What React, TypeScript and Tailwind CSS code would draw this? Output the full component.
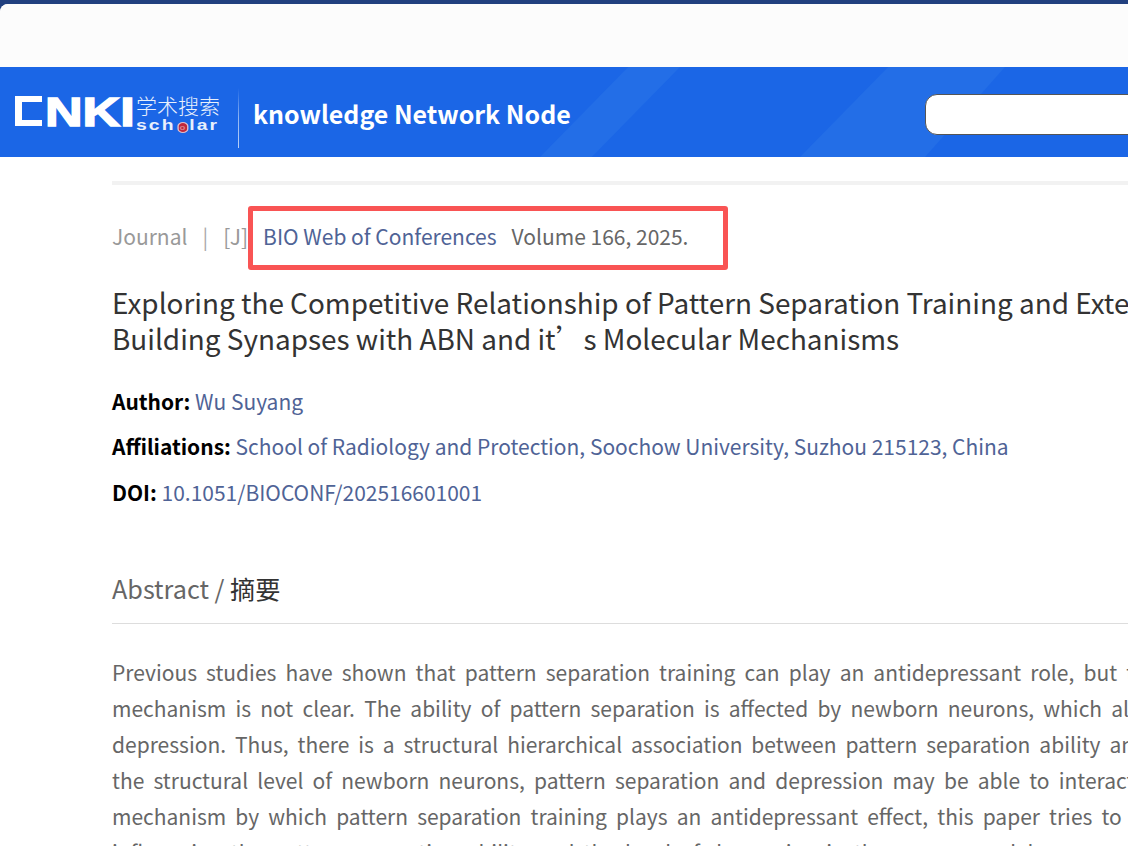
const FONT = "font-['Noto_Sans_CJK_SC','Noto_Sans',sans-serif]";

const lines: [string, string][] = [
  ["Previous studies have shown that pattern separation training can play an antidepressant role, but the", "[word-spacing:4.4px]"],
  ["mechanism is not clear. The ability of pattern separation is affected by newborn neurons, which also", "[word-spacing:4.5px]"],
  ["depression. Thus, there is a structural hierarchical association between pattern separation ability and", "[word-spacing:4.2px]"],
  ["the structural level of newborn neurons, pattern separation and depression may be able to interact", "[word-spacing:4.45px]"],
  ["mechanism by which pattern separation training plays an antidepressant effect, this paper tries to", "[word-spacing:4.4px]"],
  ["influencing the pattern separation ability and the level of depression in the mouse model", "[word-spacing:4.4px]"],
];

function Logo() {
  return (
    <div className="flex items-start h-[34px] text-white">
      <div className="w-[27px] h-[30px] mt-[1px] border-l-[7px] border-y-[6px] border-white" />
      <div className="w-[88px] h-[30px] ml-[3px] mt-[2px] overflow-visible">
        <span className="block origin-top-left scale-x-[1.27] font-['Liberation_Sans',sans-serif] font-bold text-[41px] leading-[30px] [-webkit-text-stroke:1.5px_white] whitespace-nowrap">NKI</span>
      </div>
      <div className="flex flex-col ml-[3px] opacity-90">
        <span className={`${FONT} text-[21px] leading-[20px] font-light whitespace-nowrap`}>学术搜索</span>
        <span className="block origin-top-left scale-x-[1.38] mt-[4px] font-['Liberation_Sans',sans-serif] text-[14px] leading-[12px] font-bold tracking-[1.5px] whitespace-nowrap">
          sch<span className="inline-block w-[8px] h-[11px] rounded-full bg-[#d4212a] border border-[#f3c9cc] text-[#e88] leading-[9px] text-[7px] text-center tracking-normal mx-[1px]">o</span>lar
        </span>
      </div>
    </div>
  );
}

export default function App() {
  return (
    <div className={`w-[1128px] h-[846px] overflow-hidden bg-[#21407f] pt-[4px] ${FONT}`}>
      <div className="h-[842px] bg-white rounded-tl-[8px] overflow-hidden">
        <div className="h-[63px] bg-[#fcfcfc]" />
        <header className="relative h-[90px] bg-[#1b66e6] flex items-center overflow-hidden">
          <div className="absolute top-0 left-[800px] w-[205px] h-[90px] bg-[#236ee7] [clip-path:polygon(43%_0,100%_0,61%_100%,0_100%)]" />
          <div className="absolute top-0 left-[540px] w-[140px] h-[90px] bg-[#236ee7] [clip-path:polygon(63%_0,100%_0,37%_100%,0_100%)]" />
          <div className="relative flex items-center pl-[15px]">
            <Logo />
            <div className="w-[1px] h-[60px] ml-[18px] mt-[11px] bg-gradient-to-b from-transparent via-[#8fb5f3] to-[#b9d0f7]" />
            <h1 className="ml-[14px] mt-[2px] text-[24.95px] font-bold text-white leading-none whitespace-nowrap">knowledge Network Node</h1>
          </div>
          <div className="absolute left-[925px] top-[27px] w-[300px] h-[41px] bg-white rounded-[12px] border border-[#555]" />
        </header>
        <main className="pl-[112px] w-[1600px]">
          <div className="h-[4px] mt-[24px] bg-[#f2f2f2]" />
          <div className="relative flex items-center h-[36px] mt-[34px] text-[21px] whitespace-nowrap">
            <span className="text-[#999]">Journal</span>
            <span className="mx-[15px] text-[#aaa]">|</span>
            <span className="text-[#999]">[J]</span>
            <span className="ml-[15px] text-[#4f6396]">BIO Web of Conferences</span>
            <span className="ml-[15px] text-[#666]">Volume 166, 2025.</span>
            <div className="absolute left-[136px] top-[-13px] w-[480px] h-[64px] border-[5px] border-[#f95454] rounded-[3px]" />
          </div>
          <h2 className="mt-[29px] text-[27.9px] leading-[36px] text-[#333] font-normal">
            <div className="whitespace-nowrap">Exploring the Competitive Relationship of Pattern Separation Training and External Stimuli in</div>
            <div className="whitespace-nowrap">Building Synapses with ABN and it’s Molecular Mechanisms</div>
          </h2>
          <div className="mt-[27px] text-[20.98px] leading-[36px] text-[#4f6396] whitespace-nowrap">
            <p><b className="text-black font-bold">Author:</b> Wu Suyang</p>
            <p className="mt-[9px]"><b className="text-black font-bold">Affiliations:</b> School of Radiology and Protection, Soochow University, Suzhou 215123, China</p>
            <p className="mt-[10px]"><b className="text-black font-bold">DOI:</b> 10.1051/BIOCONF/202516601001</p>
          </div>
          <div className="mt-[60px] h-[54px] border-b border-[#ddd] text-[25.2px] text-[#666] leading-[36px]">
            Abstract / <span className="text-[#333]">摘要</span>
          </div>
          <div className="mt-[30px] text-[21px] leading-[36px] text-[#666]">
            {lines.map(([t, c]) => (
              <div key={t} className={`whitespace-nowrap ${c}`}>{t}</div>
            ))}
          </div>
        </main>
      </div>
    </div>
  );
}
